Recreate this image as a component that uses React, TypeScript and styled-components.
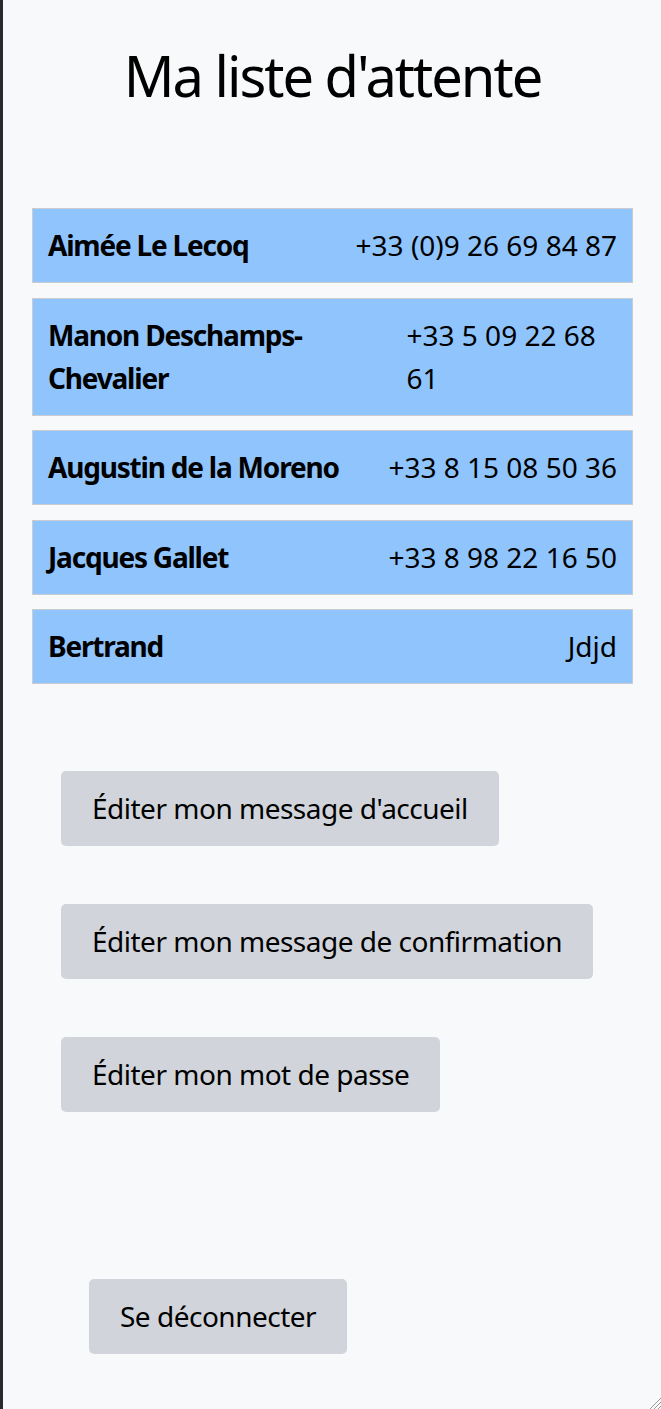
import styled, { createGlobalStyle } from "styled-components";

/* ------------------------------------------------------------------ */
/*  Data                                                               */
/* ------------------------------------------------------------------ */

type Entry = {
  name: string;
  phone: string;
};

const ENTRIES: Entry[] = [
  { name: "Aimée Le Lecoq", phone: "+33 (0)9 26 69 84 87" },
  { name: "Manon Deschamps-Chevalier", phone: "+33 5 09 22 68 61" },
  { name: "Augustin de la Moreno", phone: "+33 8 15 08 50 36" },
  { name: "Jacques Gallet", phone: "+33 8 98 22 16 50" },
  { name: "Bertrand", phone: "Jdjd" },
];

const ACTIONS = [
  "Éditer mon message d'accueil",
  "Éditer mon message de confirmation",
  "Éditer mon mot de passe",
];

const FONT = `"Noto Sans", "Open Sans", sans-serif`;

/* ------------------------------------------------------------------ */
/*  Styles                                                             */
/* ------------------------------------------------------------------ */

const GlobalStyle = createGlobalStyle`
  html, body {
    margin: 0;
    padding: 0;
    background: #f8f9fa;
  }
  * {
    box-sizing: border-box;
  }
`;

const Page = styled.div`
  position: relative;
  min-height: 1409px;
  border-left: 3px solid #2a2a2a;
  padding: 42px 28px 0 29px;
  font-family: ${FONT};
  color: #000;
  background: #f8f9fa;
`;

const Title = styled.h1`
  margin: 0;
  text-align: center;
  font-size: 56px;
  line-height: 67px;
  font-weight: 400;
  letter-spacing: -2px;
`;

const List = styled.ul`
  list-style: none;
  margin: 99px 0 0;
  padding: 0;
  display: flex;
  flex-direction: column;
  gap: 14.5px;
`;

const Row = styled.li`
  display: flex;
  justify-content: space-between;
  gap: 14px;
  padding: 15px;
  background: #8fc4fd;
  border: 1px solid #c9ccd0;
  font-size: 28px;
  line-height: 43px;
`;

const Name = styled.span`
  font-weight: 700;
  letter-spacing: -1.2px;
`;

const Phone = styled.span`
  text-align: left;
`;

const Actions = styled.div`
  display: flex;
  flex-direction: column;
  align-items: flex-start;
  gap: 58px;
  margin-top: 87px;
  padding-left: 29px;
`;

const Button = styled.button`
  padding: 16px 31px 17px;
  border: none;
  border-radius: 5px;
  background: #d1d5db;
  font-family: ${FONT};
  font-size: 28px;
  line-height: 42px;
  letter-spacing: -0.5px;
  color: #000;
  cursor: pointer;
`;

const Logout = styled.div`
  margin-top: 167px;
  padding-left: 57px;
`;

const Grip = styled.svg`
  position: absolute;
  right: 0;
  bottom: 0;
`;

/* ------------------------------------------------------------------ */
/*  App                                                                */
/* ------------------------------------------------------------------ */

export default function App() {
  return (
    <>
      <GlobalStyle />
      <Page>
        <Title>Ma liste d'attente</Title>

        <List>
          {ENTRIES.map((entry) => (
            <Row key={entry.name}>
              <Name>{entry.name}</Name>
              <Phone>{entry.phone}</Phone>
            </Row>
          ))}
        </List>

        <Actions>
          {ACTIONS.map((label) => (
            <Button key={label}>{label}</Button>
          ))}
        </Actions>

        <Logout>
          <Button>Se déconnecter</Button>
        </Logout>

        <Grip width="14" height="14" viewBox="0 0 14 14">
          <path d="M14 3 L3 14 M14 7 L7 14 M14 11 L11 14" stroke="#9a9a9a" strokeWidth="1" />
        </Grip>
      </Page>
    </>
  );
}
